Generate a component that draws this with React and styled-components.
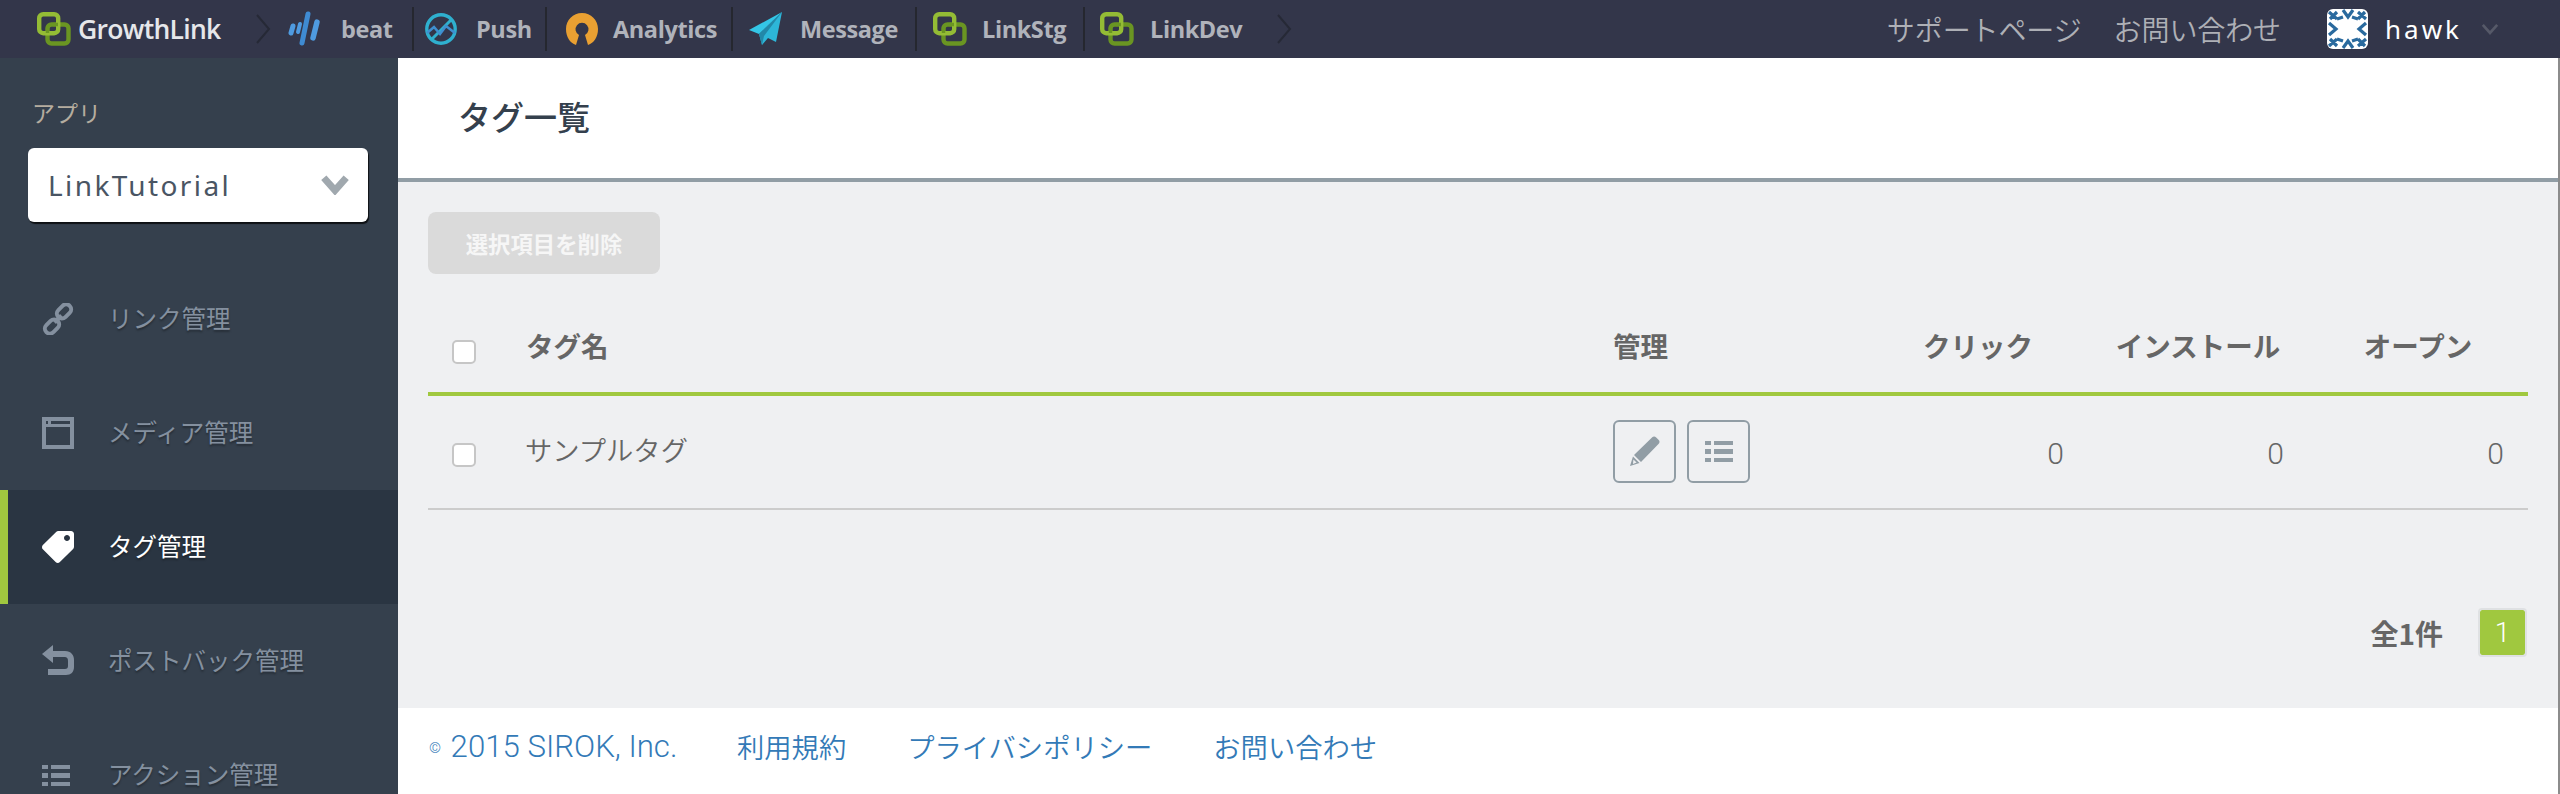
import React from "react";
import styled, { createGlobalStyle } from "styled-components";
import { FaTag } from "react-icons/fa";

const JP = `"Noto Sans CJK JP", "Noto Sans", sans-serif`;

const GlobalStyle = createGlobalStyle`
  html, body {
    margin: 0;
    padding: 0;
    height: 100%;
    overflow: hidden;
    background: #fff;
  }
  * {
    box-sizing: border-box;
  }
`;

function LinkLogo() {
  return (
    <svg width="34" height="34" viewBox="0 0 34 34" fill="none">
      <rect x="10.5" y="12.5" width="21" height="19" rx="4" stroke="#6a9522" strokeWidth="4.4" />
      <rect x="2.2" y="2.2" width="19" height="19" rx="4" stroke="#94bc35" strokeWidth="4.4" />
      <path d="M10.5 15v6M16 12.5h5" stroke="#6a9522" strokeWidth="3.4" />
    </svg>
  );
}

function BeatLogo() {
  return (
    <svg width="34" height="36" viewBox="0 0 34 36" fill="none" strokeLinecap="round">
      <path d="M5 15 3 22" stroke="#4f9be0" strokeWidth="5" />
      <path d="M12 13 10 21" stroke="#4f9be0" strokeWidth="4" />
      <path d="M20 3 14 32" stroke="#3f8bd2" strokeWidth="5" />
      <path d="M29 11 25 27" stroke="#4f9be0" strokeWidth="5.4" />
    </svg>
  );
}

function PushLogo() {
  return (
    <svg width="34" height="36" viewBox="0 0 34 36" fill="none">
      <circle cx="17" cy="18" r="14.2" stroke="#2fb0cf" strokeWidth="3.4" />
      <path d="M7 29 28 8" stroke="#2fb0cf" strokeWidth="3" />
      <path d="M3 22 10 16l6 7 6-8 9 7" stroke="#3f8fd0" strokeWidth="2.6" />
    </svg>
  );
}

function AnalyticsLogo() {
  return (
    <svg width="34" height="36" viewBox="0 0 34 36">
      <path
        d="M11 34C5 32 1 26 1 18 1 9 8 2 17 2s16 7 16 16c0 8-4 14-10 16l-3-10a6.5 6.5 0 1 0-6 0Z"
        fill="#e9a032"
      />
    </svg>
  );
}

function MessageLogo() {
  return (
    <svg width="34" height="36" viewBox="0 0 34 36">
      <path d="M33 1 0 19l10 4Z" fill="#34c6e6" />
      <path d="M33 1 10 23l3 11 6-7 8 4Z" fill="#2db6d8" />
      <path d="M33 1 10 23l3 11 2-9Z" fill="#2288a8" />
    </svg>
  );
}

function Avatar() {
  return (
    <AvatarBox>
      <svg width="41" height="40" viewBox="0 0 41 40" fill="none" stroke="#2a6a9e" strokeWidth="3.2">
        <path d="M2 3l8 7M10 3 3 10M16 1l5 7 5-7M31 3l8 7M31 10l7-7" />
        <path d="M2 37l8-7M3 30l7 7M16 39l5-7 5 7M31 37l8-7M31 30l7 7" />
        <path d="M2 14l7 6-7 6M39 14l-7 6 7 6M10 10l6-2M31 10l-6-2M10 30l6 2M31 30l-6 2" />
      </svg>
    </AvatarBox>
  );
}

function Chevron({ size = 16, color = "#fff", width = 3 }) {
  return (
    <svg width={size} height={size * 0.7} viewBox="0 0 20 14" fill="none">
      <path d="M2 2 10 11 18 2" stroke={color} strokeWidth={width} />
    </svg>
  );
}

function Crumb() {
  return (
    <svg width="16" height="30" viewBox="0 0 16 30" fill="none">
      <path d="M2 1 14 15 2 29" stroke="#262936" strokeWidth="2" />
    </svg>
  );
}

function ChainIcon() {
  return (
    <svg width="32" height="32" viewBox="0 0 32 32" fill="none" stroke="#84909f" strokeWidth="4">
      <rect x="14" y="3.5" width="16" height="10" rx="5" transform="rotate(-45 22 8.5)" />
      <rect x="2" y="18.5" width="16" height="10" rx="5" transform="rotate(-45 10 23.5)" />
      <path d="M12.5 19.5 19.5 12.5" />
    </svg>
  );
}

function MediaIcon() {
  return (
    <svg width="32" height="32" viewBox="0 0 32 32" fill="#84909f">
      <path fillRule="evenodd" d="M0 0h32v32H0ZM4 10v18h24V10ZM4 4v3h2V4Zm5 0v3h19V4Z" />
    </svg>
  );
}

function ReplyIcon() {
  return (
    <svg width="32" height="32" viewBox="0 0 32 32" fill="#84909f">
      <path d="M0 9 11 0v6h12c6 0 9 4 9 9v7c0 5-3 8-8 8H6v-6h17c2 0 3-1 3-3v-5c0-3-1-4-4-4H11v6Z" />
    </svg>
  );
}

function ListIcon({ size = 28, color = "#84909f" }) {
  return (
    <svg width={size} height={size * 0.75} viewBox="0 0 28 21" fill={color}>
      <rect x="0" y="0" width="6" height="4" />
      <rect x="9" y="0" width="19" height="4" />
      <rect x="0" y="8" width="6" height="5" />
      <rect x="9" y="8" width="19" height="5" />
      <rect x="0" y="17" width="6" height="4" />
      <rect x="9" y="17" width="19" height="4" />
    </svg>
  );
}

function PencilIcon() {
  return (
    <svg width="32" height="32" viewBox="0 0 32 32" fill="#919da5">
      <path d="M23 2.5a3 3 0 0 1 4.2 0l2.3 2.3a3 3 0 0 1 0 4.2L12 27l-7-7Z" />
      <path d="M4 21.5 10.5 28 1 31Z" />
      <path d="M4.4 24.4 7.6 27.6 4 29Z" fill="#eff0f2" />
    </svg>
  );
}

const services = [
  { name: "beat", logo: <BeatLogo />, width: 137, gap: 19, start: 11 },
  { name: "Push", logo: <PushLogo />, width: 133, gap: 18, start: 10 },
  { name: "Analytics", logo: <AnalyticsLogo />, width: 186, gap: 14, start: 18 },
  { name: "Message", logo: <MessageLogo />, width: 184, gap: 17, start: 16 },
  { name: "LinkStg", logo: <LinkLogo />, width: 168, gap: 15, start: 16 },
  { name: "LinkDev", logo: <LinkLogo />, width: 160, gap: 16, start: 15, last: true },
];

const menu = [
  { label: "リンク管理", icon: <ChainIcon /> },
  { label: "メディア管理", icon: <MediaIcon /> },
  { label: "タグ管理", icon: <FaTag size={32} color="#fff" style={{ transform: "scaleX(-1)" }} />, active: true },
  { label: "ポストバック管理", icon: <ReplyIcon /> },
  { label: "アクション管理", icon: <ListIcon /> },
];

function App() {
  return (
    <Page>
      <GlobalStyle />
      <Header>
        <Brand>
          <LinkLogo />
          <BrandName>GrowthLink</BrandName>
        </Brand>
        <Crumb />
        <Services>
          {services.map((s) => (
            <Service key={s.name} $width={s.width} $gap={s.gap} $start={s.start} $last={s.last}>
              {s.logo}
              <span>{s.name}</span>
            </Service>
          ))}
        </Services>
        <Crumb />
        <HeaderRight>
          <HeaderLink>サポートページ</HeaderLink>
          <HeaderLink>お問い合わせ</HeaderLink>
          <UserBox>
            <Avatar />
            <UserName>hawk</UserName>
            <Chevron size={18} color="#565968" width={3} />
          </UserBox>
        </HeaderRight>
      </Header>
      <Body>
        <Sidebar>
          <AppLabel>アプリ</AppLabel>
          <AppSelect>
            <span>LinkTutorial</span>
            <Chevron size={28} color="#a0a8ae" width={5} />
          </AppSelect>
          <Menu>
            {menu.map((m) => (
              <MenuItem key={m.label} $active={m.active}>
                <MenuIcon>{m.icon}</MenuIcon>
                <span>{m.label}</span>
              </MenuItem>
            ))}
          </Menu>
        </Sidebar>
        <Main>
          <TitleBar>
            <Title>タグ一覧</Title>
          </TitleBar>
          <Content>
            <DeleteButton disabled>選択項目を削除</DeleteButton>
            <HeadRow>
              <Check type="checkbox" />
              <HeadCell>タグ名</HeadCell>
              <HeadCell>管理</HeadCell>
              <HeadCell $center>クリック</HeadCell>
              <HeadCell $center>インストール</HeadCell>
              <HeadCell $center>オープン</HeadCell>
            </HeadRow>
            <BodyRow>
              <Check type="checkbox" />
              <NameCell>サンプルタグ</NameCell>
              <Actions>
                <ActionButton>
                  <PencilIcon />
                </ActionButton>
                <ActionButton>
                  <ListIcon size={28} color="#919da5" />
                </ActionButton>
              </Actions>
              <NumCell>0</NumCell>
              <NumCell>0</NumCell>
              <NumCell>0</NumCell>
            </BodyRow>
            <Pager>
              <PagerTotal>全1件</PagerTotal>
              <PagerCurrent>1</PagerCurrent>
            </Pager>
          </Content>
          <Footer>
            <Copyright>
              <small>©</small> 2015 SIROK, Inc.
            </Copyright>
            <FooterLink>利用規約</FooterLink>
            <FooterLink>プライバシポリシー</FooterLink>
            <FooterLink>お問い合わせ</FooterLink>
          </Footer>
        </Main>
      </Body>
    </Page>
  );
}

const Page = styled.div`
  height: 100vh;
  display: flex;
  flex-direction: column;
  overflow: hidden;
  font-family: ${JP};
`;

const Header = styled.header`
  height: 58px;
  flex: none;
  display: flex;
  align-items: center;
  padding-left: 37px;
  background: #33364a;
`;

const Brand = styled.div`
  width: 218px;
  display: flex;
  align-items: center;
  gap: 7px;
`;

const BrandName = styled.span`
  font-family: "Open Sans", sans-serif;
  font-size: 26.5px;
  font-weight: 600;
  letter-spacing: -0.7px;
  color: #e6e7ea;
`;

const Services = styled.nav`
  display: flex;
  align-items: center;
  margin: 0 31px 0 6px;
`;

const Service = styled.div`
  width: ${(p) => p.$width}px;
  height: 44px;
  display: flex;
  align-items: center;
  gap: ${(p) => p.$gap}px;
  padding-left: ${(p) => p.$start}px;
  border-right: ${(p) => (p.$last ? "none" : "2px solid #25272f")};
  font-family: "Open Sans", sans-serif;
  font-size: 23.5px;
  font-weight: 700;
  letter-spacing: -0.4px;
  color: #b0b3bb;
`;

const HeaderRight = styled.div`
  margin-left: auto;
  display: flex;
  align-items: center;
`;

const HeaderLink = styled.a`
  margin-right: 32px;
  font-size: 28px;
  font-weight: 350;
  letter-spacing: -0.1px;
  color: #aeb0b6;
`;

const UserBox = styled.div`
  width: 247px;
  display: flex;
  align-items: center;
  padding-left: 14px;
`;

const AvatarBox = styled.div`
  width: 41px;
  height: 40px;
  flex: none;
  display: flex;
  border-radius: 6px;
  overflow: hidden;
  background: #fff;
`;

const UserName = styled.span`
  margin: 0 19px 0 17px;
  font-family: "Noto Sans", sans-serif;
  font-size: 26px;
  letter-spacing: 3px;
  color: #fff;
`;

const Body = styled.div`
  flex: 1;
  min-height: 0;
  display: flex;
`;

const Sidebar = styled.aside`
  width: 398px;
  flex: none;
  background: #35404d;
  overflow: hidden;
`;

const AppLabel = styled.div`
  margin: 39px 0 0 32px;
  font-size: 23px;
  line-height: 30px;
  color: #b5ad9f;
`;

const AppSelect = styled.div`
  width: 340px;
  height: 74px;
  margin: 21px 0 0 28px;
  padding: 0 19px 0 20px;
  display: flex;
  align-items: center;
  justify-content: space-between;
  border-radius: 6px;
  background: #fff;
  box-shadow: 1px 2px 1px rgba(0, 0, 0, 0.75);
  font-family: "Noto Sans", sans-serif;
  font-size: 28px;
  letter-spacing: 2.4px;
  color: #4a5563;
`;

const Menu = styled.ul`
  list-style: none;
  margin: 40px 0 0;
  padding: 0;
`;

const MenuItem = styled.li`
  height: 114px;
  display: flex;
  align-items: center;
  padding-left: ${(p) => (p.$active ? "34px" : "42px")};
  border-left: ${(p) => (p.$active ? "8px solid #a0c83f" : "none")};
  background: ${(p) => (p.$active ? "#2a3542" : "transparent")};
  font-size: 24.5px;
  color: ${(p) => (p.$active ? "#fff" : "#84909f")};
  text-shadow: 0 2px 2px rgba(0, 0, 0, 0.3);
  span:last-child {
    margin-bottom: 3px;
  }
`;

const MenuIcon = styled.span`
  width: 66px;
  flex: none;
  display: flex;
  align-items: center;
`;

const Main = styled.main`
  flex: 1;
  min-width: 0;
  display: flex;
  flex-direction: column;
  border-right: 2px solid #8c8c8c;
`;

const TitleBar = styled.div`
  height: 124px;
  flex: none;
  display: flex;
  align-items: center;
  padding: 0 0 4px 60px;
  background: #fff;
  border-bottom: 4px solid #919da5;
`;

const Title = styled.h1`
  margin: 0;
  font-size: 33px;
  font-weight: 500;
  color: #34404d;
`;

const Content = styled.section`
  flex: 1;
  padding: 30px 30px 0;
  background: #eff0f2;
`;

const DeleteButton = styled.button`
  width: 232px;
  height: 62px;
  display: block;
  border: none;
  border-radius: 8px;
  background: #dadada;
  font-family: ${JP};
  font-size: 22.4px;
  font-weight: 700;
  color: #f6f6f6;
`;

const columns = "98px 1087px 255px 220px 220px 220px";

const HeadRow = styled.div`
  height: 126px;
  margin-top: -4px;
  padding-top: 34px;
  display: grid;
  grid-template-columns: ${columns};
  align-items: center;
  border-bottom: 4px solid #a0c83f;
`;

const BodyRow = styled.div`
  height: 114px;
  padding-bottom: 2px;
  display: grid;
  grid-template-columns: ${columns};
  align-items: center;
  border-bottom: 2px solid #cccccc;
`;

const Check = styled.input`
  appearance: none;
  width: 24px;
  height: 24px;
  margin: 8px 0 0 24px;
  border: 2px solid #c6c6c6;
  border-radius: 5px;
  background: #fff;
`;

const HeadCell = styled.div`
  margin-bottom: 7px;
  font-size: 27.5px;
  font-weight: 700;
  color: #666;
  text-align: ${(p) => (p.$center ? "center" : "left")};
`;

const NameCell = styled.div`
  margin: 0 0 4px -1px;
  font-size: 27.3px;
  font-weight: 350;
  color: #666;
`;

const Actions = styled.div`
  display: flex;
  gap: 11px;
`;

const ActionButton = styled.button`
  width: 63px;
  height: 63px;
  padding: 0;
  display: flex;
  align-items: center;
  justify-content: center;
  border: 2px solid #919da5;
  border-radius: 6px;
  background: transparent;
`;

const NumCell = styled.div`
  padding: 4px 24px 0 0;
  font-family: Roboto, sans-serif;
  font-size: 30px;
  font-weight: 300;
  text-align: right;
  color: #666;
`;

const Pager = styled.div`
  margin-top: 98px;
  display: flex;
  align-items: center;
  justify-content: flex-end;
  gap: 35px;
  padding-right: 1px;
`;

const PagerTotal = styled.span`
  font-size: 28px;
  font-weight: 700;
  color: #666;
`;

const PagerCurrent = styled.span`
  width: 49px;
  height: 49px;
  display: flex;
  align-items: center;
  justify-content: center;
  border: 2px solid #dfe1e3;
  border-radius: 4px;
  background: #a0c83f;
  background-clip: padding-box;
  font-family: Roboto, sans-serif;
  font-size: 28px;
  font-weight: 300;
  color: #fff;
`;

const Footer = styled.footer`
  height: 86px;
  flex: none;
  display: flex;
  align-items: center;
  padding: 0 0 10px 31px;
  background: #fff;
  font-size: 27.3px;
  font-weight: 350;
  color: #337ab7;
`;

const Copyright = styled.span`
  width: 308px;
  font-family: Roboto, sans-serif;
  font-size: 31.2px;
  font-weight: 300;
  small {
    font-size: 15px;
    vertical-align: 4px;
    margin-right: 2px;
  }
`;

const FooterLink = styled.a`
  margin-right: 61px;
`;

export default App;
